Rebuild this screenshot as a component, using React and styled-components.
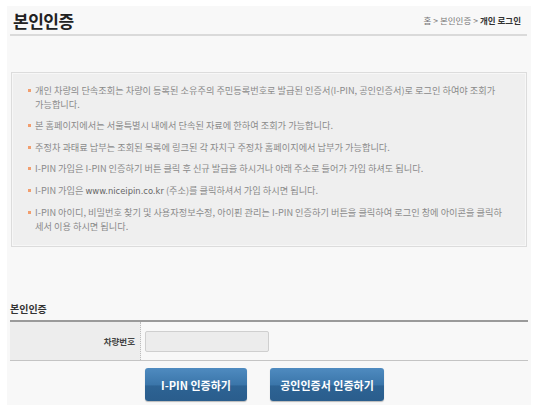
import React from "react";
import styled, { createGlobalStyle } from "styled-components";

const GlobalStyle = createGlobalStyle`
  body {
    margin: 0;
    background: #ffffff;
    font-family: "Noto Sans CJK KR", "Noto Sans", sans-serif;
  }
`;

const Page = styled.div`
  margin: 6px 0 0 7px;
  width: 524px;
  height: 399px;
  background: #f8f8f8;
  display: flex;
  flex-direction: column;
`;

const Header = styled.div`
  margin: 0 4px 0 3px;
  height: 28px;
  display: flex;
  align-items: center;
  justify-content: space-between;
  border-bottom: 2px solid #dadada;
`;

const Title = styled.h1`
  margin: 0 0 0 3px;
  font-size: 17px;
  font-weight: 700;
  color: #222;
  letter-spacing: -0.5px;
`;

const Breadcrumb = styled.div`
  font-size: 8.5px;
  color: #777;
  margin-right: 6px;
  display: flex;
  gap: 2px;
  b {
    color: #333;
    font-weight: 700;
  }
`;

const Notice = styled.ul`
  list-style: none;
  margin: 36px 4px 0 4px;
  padding: 11px 8px 14px 16px;
  background: #efefef;
  border: 1px solid #dcdcdc;
  box-shadow: inset 0 0 0 1px #f7f7f7;
  height: 175px;
  box-sizing: border-box;
`;

const Item = styled.li`
  position: relative;
  padding-left: 7px;
  font-size: 9.2px;
  line-height: 13.5px;
  color: #8a8a8a;
  margin-bottom: 8px;
  white-space: nowrap;
  &::before {
    content: "";
    position: absolute;
    left: 0;
    top: 5px;
    width: 3px;
    height: 3px;
    background: #f29e6e;
  }
  a {
    color: #666;
    text-decoration: none;
    font-family: "DejaVu Sans", sans-serif;
    font-size: 8.4px;
  }
`;

const Section = styled.div`
  margin: 54px 3px 0 3px;
`;

const SectionTitle = styled.h2`
  margin: 0 0 4px;
  font-size: 10px;
  font-weight: 700;
  color: #333;
  line-height: 15px;
`;

const Table = styled.div`
  display: grid;
  grid-template-columns: 131px 1fr;
  height: 41px;
  border-top: 2px solid #9a9a9a;
  border-bottom: 1px solid #c4c4c4;
  box-sizing: border-box;
`;

const Label = styled.div`
  background: #ededed;
  border-right: 1px dotted #bdbdbd;
  display: flex;
  align-items: center;
  justify-content: flex-end;
  padding-right: 5px;
  font-size: 8.5px;
  font-weight: 700;
  color: #444;
`;

const Field = styled.div`
  display: flex;
  align-items: center;
  padding-left: 4px;
`;

const Input = styled.input`
  width: 124px;
  height: 21px;
  box-sizing: border-box;
  background: #ececec;
  border: 1px solid #cfcfcf;
  border-radius: 2px;
`;

const Buttons = styled.div`
  display: flex;
  gap: 23px;
  margin: 7px 0 0 135px;
`;

const Button = styled.button`
  width: ${(p) => p.$w}px;
  height: 33px;
  border: none;
  border-radius: 3px;
  background: linear-gradient(#4f8bc0 0%, #3b76aa 50%, #2d6394 55%, #2a5d8c 100%);
  box-shadow: 0 1px 1px rgba(0, 0, 0, 0.25);
  color: #fff;
  font-family: "Noto Sans CJK KR", sans-serif;
  font-size: 11px;
  font-weight: 700;
  padding: 0;
`;

const items = [
  ["개인 차량의 단속조회는 차량이 등록된 소유주의 주민등록번호로 발급된 인증서(I-PIN, 공인인증서)로 로그인 하여야 조회가", "가능합니다."],
  ["본 홈페이지에서는 서울특별시 내에서 단속된 자료에 한하여 조회가 가능합니다."],
  ["주정차 과태료 납부는 조회된 목록에 링크된 각 자치구 주정차 홈페이지에서 납부가 가능합니다."],
  ["I-PIN 가입은 I-PIN 인증하기 버튼 클릭 후 신규 발급을 하시거나 아래 주소로 들어가 가입 하셔도 됩니다."],
  null,
  ["I-PIN 아이디, 비밀번호 찾기 및 사용자정보수정, 아이핀 관리는 I-PIN 인증하기 버튼을 클릭하여 로그인 창에 아이콘을 클릭하", "세서 이용 하시면 됩니다."],
];

const App = () => {
  return (
    <>
      <GlobalStyle />
      <Page>
        <Header>
          <Title>본인인증</Title>
          <Breadcrumb>
            <span>홈</span>
            <span>&gt;</span>
            <span>본인인증</span>
            <span>&gt;</span>
            <b>개인 로그인</b>
          </Breadcrumb>
        </Header>
        <Notice>
          {items.map((lines, i) =>
            lines ? (
              <Item key={i}>
                {lines[0]}
                {lines[1] && (
                  <>
                    <br />
                    {lines[1]}
                  </>
                )}
              </Item>
            ) : (
              <Item key={i}>
                I-PIN 가입은 <a href="#">www.niceipin.co.kr</a> (주소)를 클릭하셔서 가입 하시면 됩니다.
              </Item>
            )
          )}
        </Notice>
        <Section>
          <SectionTitle>본인인증</SectionTitle>
          <Table>
            <Label>차량번호</Label>
            <Field>
              <Input type="text" />
            </Field>
          </Table>
          <Buttons>
            <Button $w={102}>I-PIN 인증하기</Button>
            <Button $w={114}>공인인증서 인증하기</Button>
          </Buttons>
        </Section>
      </Page>
    </>
  );
};

export default App;
